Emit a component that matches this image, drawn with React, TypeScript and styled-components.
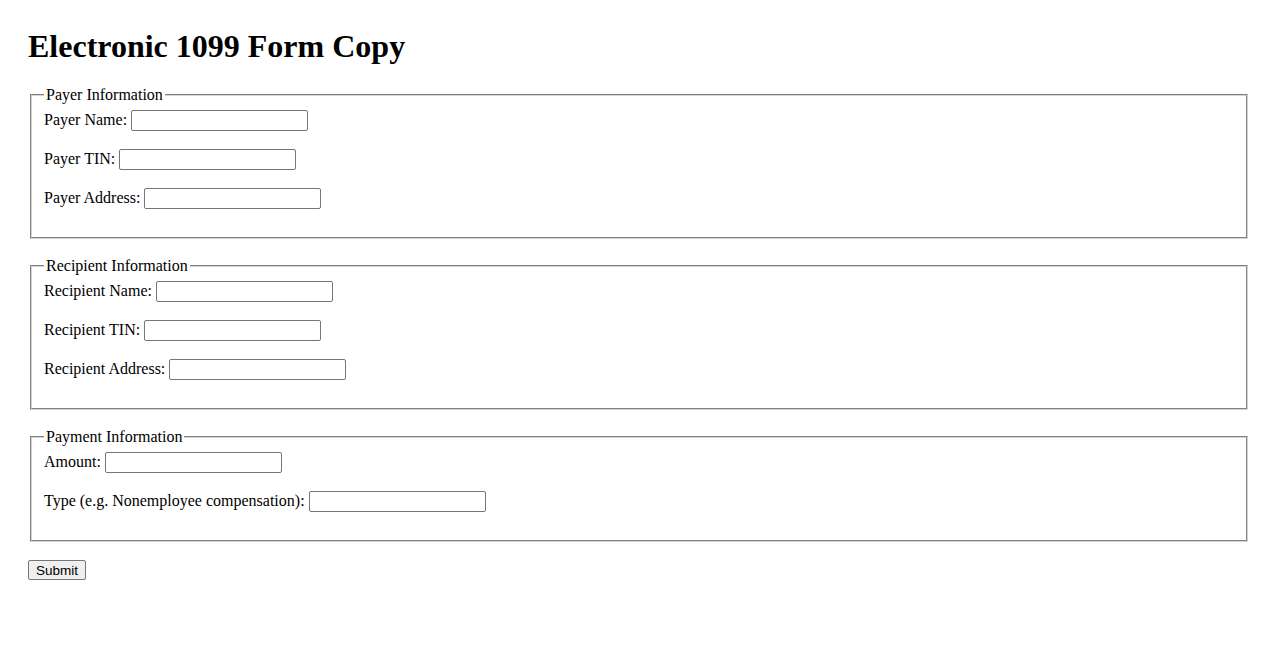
import React from 'react';
import styled, { createGlobalStyle } from 'styled-components';

const GlobalStyle = createGlobalStyle`
  body {
    margin: 8px;
    padding: 20px;
    font-family: "Liberation Serif", "Times New Roman", serif;
    font-size: 16px;
    color: #000;
    background: #fff;
  }
`;

const Title = styled.h1`
  font-size: 32px;
  font-weight: bold;
  margin: 0 0 21px;
`;

const Fieldset = styled.fieldset`
  margin: 0 2px 18px;
  padding: 6px 12px 10px;
  border: 2px groove #d4d4d4;
`;

const Legend = styled.legend`
  padding: 0 2px;
`;

const Field = styled.p`
  margin: 0 0 18px;
`;

const Input = styled.input`
  font-family: "Liberation Sans", Arial, sans-serif;
  font-size: 13.33px;
  width: 177px;
  height: 21px;
  box-sizing: border-box;
  padding: 1px 2px;
  border: 1px solid #767676;
  border-radius: 2px;
`;

const SubmitButton = styled.button`
  font-family: "Liberation Sans", Arial, sans-serif;
  font-size: 13.5px;
  width: 58px;
  height: 20px;
  padding: 1px 6px;
  border: 1px solid #767676;
  border-radius: 2px;
  background: #efefef;
`;

type Section = { legend: string; fields: string[] };

const sections: Section[] = [
  { legend: 'Payer Information', fields: ['Payer Name:', 'Payer TIN:', 'Payer Address:'] },
  { legend: 'Recipient Information', fields: ['Recipient Name:', 'Recipient TIN:', 'Recipient Address:'] },
  { legend: 'Payment Information', fields: ['Amount:', 'Type (e.g. Nonemployee compensation):'] },
];

const App: React.FC = () => {
  return (
    <>
      <GlobalStyle />
      <Title>Electronic 1099 Form Copy</Title>
      <form onSubmit={(e) => e.preventDefault()}>
        {sections.map((s) => (
          <Fieldset key={s.legend}>
            <Legend>{s.legend}</Legend>
            {s.fields.map((f) => (
              <Field key={f}>
                <label>{f} </label>
                <Input type="text" />
              </Field>
            ))}
          </Fieldset>
        ))}
        <SubmitButton type="submit">Submit</SubmitButton>
      </form>
    </>
  );
};

export default App;
